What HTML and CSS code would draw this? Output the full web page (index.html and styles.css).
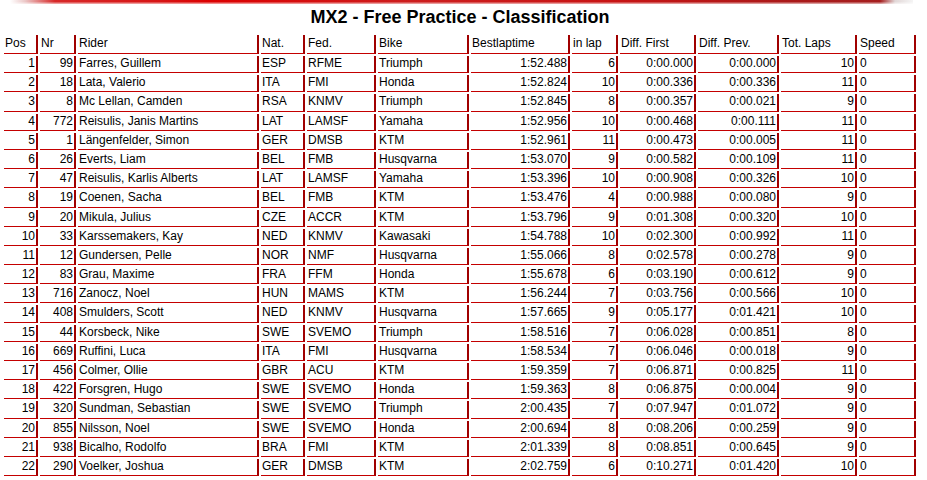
FILE: index.html
```html
<!DOCTYPE html>
<html>
<head>
<meta charset="utf-8">
<title>MX2 - Free Practice - Classification</title>
<link rel="stylesheet" href="styles.css">
</head>
<body>
<div class="page">
  <div class="topbar"></div>
  <h1 class="title">MX2 - Free Practice - Classification</h1>
  <table class="results">
    <thead>
      <tr>
        <th class="c-pos">Pos</th>
        <th class="c-nr">Nr</th>
        <th class="c-rider">Rider</th>
        <th class="c-nat">Nat.</th>
        <th class="c-fed">Fed.</th>
        <th class="c-bike">Bike</th>
        <th class="c-best">Bestlaptime</th>
        <th class="c-inlap">in lap</th>
        <th class="c-dfirst">Diff. First</th>
        <th class="c-dprev">Diff. Prev.</th>
        <th class="c-laps">Tot. Laps</th>
        <th class="c-speed">Speed</th>
      </tr>
    </thead>
    <tbody>
      <tr><td class="r">1</td><td class="r">99</td><td>Farres, Guillem</td><td>ESP</td><td>RFME</td><td>Triumph</td><td class="r">1:52.488</td><td class="r">6</td><td class="r">0:00.000</td><td class="r">0:00.000</td><td class="r">10</td><td>0</td></tr>
      <tr><td class="r">2</td><td class="r">18</td><td>Lata, Valerio</td><td>ITA</td><td>FMI</td><td>Honda</td><td class="r">1:52.824</td><td class="r">10</td><td class="r">0:00.336</td><td class="r">0:00.336</td><td class="r">11</td><td>0</td></tr>
      <tr><td class="r">3</td><td class="r">8</td><td>Mc Lellan, Camden</td><td>RSA</td><td>KNMV</td><td>Triumph</td><td class="r">1:52.845</td><td class="r">8</td><td class="r">0:00.357</td><td class="r">0:00.021</td><td class="r">9</td><td>0</td></tr>
      <tr><td class="r">4</td><td class="r">772</td><td>Reisulis, Janis Martins</td><td>LAT</td><td>LAMSF</td><td>Yamaha</td><td class="r">1:52.956</td><td class="r">10</td><td class="r">0:00.468</td><td class="r">0:00.111</td><td class="r">11</td><td>0</td></tr>
      <tr><td class="r">5</td><td class="r">1</td><td>Längenfelder, Simon</td><td>GER</td><td>DMSB</td><td>KTM</td><td class="r">1:52.961</td><td class="r">11</td><td class="r">0:00.473</td><td class="r">0:00.005</td><td class="r">11</td><td>0</td></tr>
      <tr><td class="r">6</td><td class="r">26</td><td>Everts, Liam</td><td>BEL</td><td>FMB</td><td>Husqvarna</td><td class="r">1:53.070</td><td class="r">9</td><td class="r">0:00.582</td><td class="r">0:00.109</td><td class="r">11</td><td>0</td></tr>
      <tr><td class="r">7</td><td class="r">47</td><td>Reisulis, Karlis Alberts</td><td>LAT</td><td>LAMSF</td><td>Yamaha</td><td class="r">1:53.396</td><td class="r">10</td><td class="r">0:00.908</td><td class="r">0:00.326</td><td class="r">10</td><td>0</td></tr>
      <tr><td class="r">8</td><td class="r">19</td><td>Coenen, Sacha</td><td>BEL</td><td>FMB</td><td>KTM</td><td class="r">1:53.476</td><td class="r">4</td><td class="r">0:00.988</td><td class="r">0:00.080</td><td class="r">9</td><td>0</td></tr>
      <tr><td class="r">9</td><td class="r">20</td><td>Mikula, Julius</td><td>CZE</td><td>ACCR</td><td>KTM</td><td class="r">1:53.796</td><td class="r">9</td><td class="r">0:01.308</td><td class="r">0:00.320</td><td class="r">10</td><td>0</td></tr>
      <tr><td class="r">10</td><td class="r">33</td><td>Karssemakers, Kay</td><td>NED</td><td>KNMV</td><td>Kawasaki</td><td class="r">1:54.788</td><td class="r">10</td><td class="r">0:02.300</td><td class="r">0:00.992</td><td class="r">11</td><td>0</td></tr>
      <tr><td class="r">11</td><td class="r">12</td><td>Gundersen, Pelle</td><td>NOR</td><td>NMF</td><td>Husqvarna</td><td class="r">1:55.066</td><td class="r">8</td><td class="r">0:02.578</td><td class="r">0:00.278</td><td class="r">9</td><td>0</td></tr>
      <tr><td class="r">12</td><td class="r">83</td><td>Grau, Maxime</td><td>FRA</td><td>FFM</td><td>Honda</td><td class="r">1:55.678</td><td class="r">6</td><td class="r">0:03.190</td><td class="r">0:00.612</td><td class="r">9</td><td>0</td></tr>
      <tr><td class="r">13</td><td class="r">716</td><td>Zanocz, Noel</td><td>HUN</td><td>MAMS</td><td>KTM</td><td class="r">1:56.244</td><td class="r">7</td><td class="r">0:03.756</td><td class="r">0:00.566</td><td class="r">10</td><td>0</td></tr>
      <tr><td class="r">14</td><td class="r">408</td><td>Smulders, Scott</td><td>NED</td><td>KNMV</td><td>Husqvarna</td><td class="r">1:57.665</td><td class="r">9</td><td class="r">0:05.177</td><td class="r">0:01.421</td><td class="r">10</td><td>0</td></tr>
      <tr><td class="r">15</td><td class="r">44</td><td>Korsbeck, Nike</td><td>SWE</td><td>SVEMO</td><td>Triumph</td><td class="r">1:58.516</td><td class="r">7</td><td class="r">0:06.028</td><td class="r">0:00.851</td><td class="r">8</td><td>0</td></tr>
      <tr><td class="r">16</td><td class="r">669</td><td>Ruffini, Luca</td><td>ITA</td><td>FMI</td><td>Husqvarna</td><td class="r">1:58.534</td><td class="r">7</td><td class="r">0:06.046</td><td class="r">0:00.018</td><td class="r">9</td><td>0</td></tr>
      <tr><td class="r">17</td><td class="r">456</td><td>Colmer, Ollie</td><td>GBR</td><td>ACU</td><td>KTM</td><td class="r">1:59.359</td><td class="r">7</td><td class="r">0:06.871</td><td class="r">0:00.825</td><td class="r">11</td><td>0</td></tr>
      <tr><td class="r">18</td><td class="r">422</td><td>Forsgren, Hugo</td><td>SWE</td><td>SVEMO</td><td>Honda</td><td class="r">1:59.363</td><td class="r">8</td><td class="r">0:06.875</td><td class="r">0:00.004</td><td class="r">9</td><td>0</td></tr>
      <tr><td class="r">19</td><td class="r">320</td><td>Sundman, Sebastian</td><td>SWE</td><td>SVEMO</td><td>Triumph</td><td class="r">2:00.435</td><td class="r">7</td><td class="r">0:07.947</td><td class="r">0:01.072</td><td class="r">9</td><td>0</td></tr>
      <tr><td class="r">20</td><td class="r">855</td><td>Nilsson, Noel</td><td>SWE</td><td>SVEMO</td><td>Honda</td><td class="r">2:00.694</td><td class="r">8</td><td class="r">0:08.206</td><td class="r">0:00.259</td><td class="r">9</td><td>0</td></tr>
      <tr><td class="r">21</td><td class="r">938</td><td>Bicalho, Rodolfo</td><td>BRA</td><td>FMI</td><td>KTM</td><td class="r">2:01.339</td><td class="r">8</td><td class="r">0:08.851</td><td class="r">0:00.645</td><td class="r">9</td><td>0</td></tr>
      <tr><td class="r">22</td><td class="r">290</td><td>Voelker, Joshua</td><td>GER</td><td>DMSB</td><td>KTM</td><td class="r">2:02.759</td><td class="r">6</td><td class="r">0:10.271</td><td class="r">0:01.420</td><td class="r">10</td><td>0</td></tr>
    </tbody>
  </table>
</div>
</body>
</html>
```

FILE: styles.css
```css
html, body {
  margin: 0;
  padding: 0;
  background: #ffffff;
}

body {
  font-family: "Liberation Sans", Arial, sans-serif;
  font-size: 12px;
  color: #000000;
}

.page {
  width: 916px;
  padding: 0 2px;
}

.topbar {
  height: 4px;
  margin: 0 5px 0 8px;
  background:
    linear-gradient(to right,
      rgba(255,255,255,1) 0px,
      rgba(235,200,200,1) 15px,
      rgba(215,40,40,1) 45px,
      rgba(215,20,20,1) 150px,
      rgba(220,0,0,1) 200px,
      rgba(205,30,30,1) 400px,
      rgba(200,20,20,1) 600px,
      rgba(170,25,25,1) 780px,
      rgba(165,30,30,1) 870px,
      rgba(225,215,215,1) 885px,
      rgba(245,245,245,1) 903px);
  -webkit-mask-image: linear-gradient(to bottom, #000 40%, rgba(0,0,0,0.3) 100%);
  mask-image: linear-gradient(to bottom, #000 40%, rgba(0,0,0,0.3) 100%);
}

.title {
  margin: 3px 0 5px 0;
  font-size: 18px;
  line-height: 21px;
  font-weight: bold;
  text-align: center;
}

.results {
  table-layout: fixed;
  border-collapse: separate;
  border-spacing: 2px;
  width: 916px;
}

.results th,
.results td {
  box-sizing: border-box;
  border-right: 2px solid #a00000;
  border-bottom: 1px solid #c40000;
  white-space: nowrap;
  overflow: hidden;
}

.results th {
  font-weight: normal;
  text-align: left;
  line-height: 13px;
  padding: 2px 1px 3px 1px;
}

.results td {
  line-height: 14.18px;
  padding: 0 1px 2px 1px;
  text-align: left;
}

.results td.r {
  text-align: right;
}

.c-pos { width: 34px; }
.c-nr { width: 36px; }
.c-rider { width: 181px; }
.c-nat { width: 44px; }
.c-fed { width: 69px; }
.c-bike { width: 91px; }
.c-best { width: 99px; }
.c-inlap { width: 46px; }
.c-dfirst { width: 76px; }
.c-dprev { width: 81px; }
.c-laps { width: 76px; }
.c-speed { width: 57px; }
```
